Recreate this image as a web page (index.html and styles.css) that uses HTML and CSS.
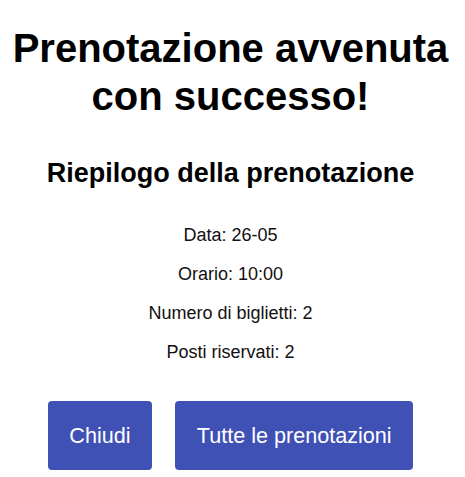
FILE: index.html
```html
<!DOCTYPE html>
<html lang="it">
<head>
<meta charset="utf-8">
<title>Prenotazione avvenuta</title>
<link rel="stylesheet" href="styles.css">
</head>
<body>
<main class="confirm">
  <h1 class="confirm-title">Prenotazione avvenuta con successo!</h1>
  <h2 class="confirm-subtitle">Riepilogo della prenotazione</h2>
  <p class="confirm-line">Data: 26-05</p>
  <p class="confirm-line">Orario: 10:00</p>
  <p class="confirm-line">Numero di biglietti: 2</p>
  <p class="confirm-line">Posti riservati: 2</p>
  <div class="confirm-actions">
    <button class="btn" type="button">Chiudi</button>
    <button class="btn" type="button">Tutte le prenotazioni</button>
  </div>
</main>
</body>
</html>
```
FILE: styles.css
```css
html, body {
  background: #ffffff;
}
body {
  margin: 8px 12px 8px 8px;
  font-family: "Liberation Sans", Arial, sans-serif;
  font-size: 18px;
  color: #111111;
}
.confirm {
  text-align: center;
}
.confirm-title {
  font-size: 40px;
  line-height: 1.2;
  font-weight: bold;
  margin: 16px 0 0;
  color: #000;
}
.confirm-subtitle {
  font-size: 27px;
  font-weight: bold;
  margin: 37.5px 0 36.3px;
  color: #000;
}
.confirm-line {
  margin: 18px 0;
}
.confirm-actions {
  display: flex;
  justify-content: center;
  gap: 23px;
  margin-top: 38.5px;
}
.btn {
  font-family: inherit;
  font-size: 1.2em;
  padding: 1em;
  border: none;
  border-radius: 4px;
  background: #3f51b5;
  color: #ffffff;
  line-height: normal;
}
```
